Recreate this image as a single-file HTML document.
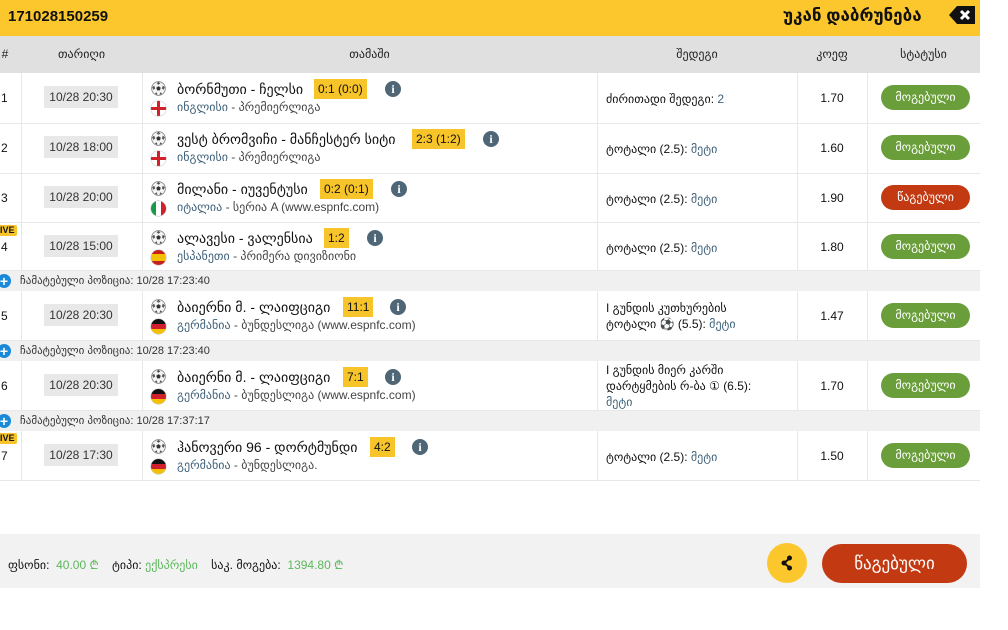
<!DOCTYPE html>
<html><head><meta charset="utf-8"><style>
*{box-sizing:border-box;margin:0;padding:0}
body{width:1008px;height:630px;background:#fff;font-family:"Liberation Sans","DejaVu Sans",sans-serif;color:#111;position:relative;overflow:hidden;font-size:12px}
.a{position:absolute}
.hdr{left:0;top:0;width:980px;height:36px;background:#fcc72c}
.th{left:0;top:36px;width:980px;height:37px;background:#e0e0e0}
.th div{position:absolute;top:11px;font-size:12px;text-align:center;color:#222}
.row{position:absolute;left:0;width:980px;border-bottom:1px solid #e8e8e8;background:#fff}
.row .v{position:absolute;top:0;bottom:0;width:1px;background:#e8e8e8}
.num{position:absolute;left:1px;font-size:12px}
.date{position:absolute;left:44px;width:74px;height:22px;background:#e8e8e8;color:#333;font-size:12px;text-align:center;line-height:22px}
.ball{position:absolute;left:151px;width:15px;height:15px}
.flag{position:absolute;left:151px;width:15px;height:15px;border-radius:50%;overflow:hidden;box-shadow:0 0 0 0.5px #bbb}
.t{position:absolute;left:177px;font-size:14px;white-space:nowrap}
.s{position:absolute;left:177px;font-size:12px;color:#444;white-space:nowrap}
.s b{font-weight:normal;color:#3e6079}
.sc{position:absolute;height:20px;background:#f7c42a;font-size:12px;line-height:20px;text-align:center;padding:0 4px}
.inf{position:absolute;width:16px;height:16px;border-radius:50%;background:#4f6677;color:#fff;font-weight:bold;font-size:12px;line-height:16px;text-align:center;font-family:"Liberation Serif",serif}
.res{position:absolute;left:606px;font-size:12px;line-height:16px}
.res b{font-weight:normal;color:#3e6079}
.cf{position:absolute;left:797px;width:70px;text-align:center;font-size:12px}
.st{position:absolute;left:881px;width:89px;height:25px;border-radius:13px;background:#6a9e3a;color:#fff;text-align:center;line-height:25px;font-size:12px}
.red{background:#c33a12}
.sub{position:absolute;left:0;width:980px;height:20px;background:#f0f0f0;font-size:11px;color:#333;line-height:20px;padding-left:20px}
.plus{position:absolute;left:-3px;top:3px;width:14px;height:14px;border-radius:50%;background:#1a8ad8;color:#fff;font-weight:bold;font-size:14px;line-height:14px;text-align:center}
.live{position:absolute;left:0;width:17px;height:11px;background:#f7c42a;font-size:9px;font-weight:bold;line-height:11px;overflow:hidden;border-radius:0 2px 2px 0}
</style></head><body>
<svg width="0" height="0" style="position:absolute"><defs><symbol id="b" viewBox="0 0 16 16"><circle cx="8" cy="8" r="7.3" fill="#f4f4f4" stroke="#777" stroke-width="0.8"/><path d="M8 5.5L10.4 7.2L9.5 10H6.5L5.6 7.2Z" fill="#333"/><path d="M8 0.8L10 2.5L8 4L6 2.5Z M14.8 6.5L13.5 9.5L11.6 8L12.5 5Z M1.2 6.5L2.5 9.5L4.4 8L3.5 5Z M4 13.5L6 12L7 14.8Z M12 13.5L10 12L9 14.8Z" fill="#555"/></symbol></defs></svg>
<div class="a hdr"></div>
<div class="a" style="left:8px;top:8px;font-size:15px;font-weight:bold">171028150259</div>
<div class="a" style="left:783px;top:6px;font-size:17px;font-weight:bold">უკან დაბრუნება</div>
<svg class="a" style="left:947px;top:4px" width="30" height="22" viewBox="0 0 30 22"><path d="M10 2H28V20H10L2 11Z" fill="#111"/><path d="M14 7L22 15M22 7L14 15" stroke="#fff" stroke-width="3"/></svg>

<div class="a th">
<div style="left:0;width:10px">#</div>
<div style="left:21px;width:121px">თარიღი</div>
<div style="left:142px;width:455px">თამაში</div>
<div style="left:597px;width:200px">შედეგი</div>
<div style="left:797px;width:70px">კოეფ</div>
<div style="left:867px;width:113px">სტატუსი</div>
</div>

<div class="row" style="top:73px;height:51px">
<div class="v" style="left:21px"></div><div class="v" style="left:142px"></div><div class="v" style="left:597px"></div><div class="v" style="left:797px"></div><div class="v" style="left:867px"></div>
<div class="num" style="top:18px">1</div><div class="date" style="top:13px">10/28 20:30</div>
<svg class="ball" style="top:8px"><use href="#b"/></svg><div class="t" style="top:8px">ბორნმუთი - ჩელსი</div>
<div class="sc" style="left:314px;top:6px">0:1 (0:0)</div><div class="inf" style="left:385px;top:8px">i</div>
<div class="flag" style="top:28px;background:linear-gradient(#fff 0 6px,#d0202c 6px 9px,#fff 9px)"><div style="position:absolute;left:6px;top:0;width:3px;height:15px;background:#d0202c"></div></div>
<div class="s" style="top:27px"><b>ინგლისი</b> - პრემიერლიგა</div>
<div class="res" style="top:18px">ძირითადი შედეგი: <b>2</b></div>
<div class="cf" style="top:18px">1.70</div><div class="st" style="top:12px">მოგებული</div>
</div>

<div class="row" style="top:124px;height:50px">
<div class="v" style="left:21px"></div><div class="v" style="left:142px"></div><div class="v" style="left:597px"></div><div class="v" style="left:797px"></div><div class="v" style="left:867px"></div>
<div class="num" style="top:17px">2</div><div class="date" style="top:12px">10/28 18:00</div>
<svg class="ball" style="top:7px"><use href="#b"/></svg><div class="t" style="top:7px">ვესტ ბრომვიჩი - მანჩესტერ სიტი</div>
<div class="sc" style="left:412px;top:5px">2:3 (1:2)</div><div class="inf" style="left:483px;top:7px">i</div>
<div class="flag" style="top:27px;background:linear-gradient(#fff 0 6px,#d0202c 6px 9px,#fff 9px)"><div style="position:absolute;left:6px;top:0;width:3px;height:15px;background:#d0202c"></div></div>
<div class="s" style="top:26px"><b>ინგლისი</b> - პრემიერლიგა</div>
<div class="res" style="top:17px">ტოტალი (2.5): <b>მეტი</b></div>
<div class="cf" style="top:17px">1.60</div><div class="st" style="top:11px">მოგებული</div>
</div>

<div class="row" style="top:174px;height:49px">
<div class="v" style="left:21px"></div><div class="v" style="left:142px"></div><div class="v" style="left:597px"></div><div class="v" style="left:797px"></div><div class="v" style="left:867px"></div>
<div class="num" style="top:17px">3</div><div class="date" style="top:12px">10/28 20:00</div>
<svg class="ball" style="top:7px"><use href="#b"/></svg><div class="t" style="top:7px">მილანი - იუვენტუსი</div>
<div class="sc" style="left:320px;top:5px">0:2 (0:1)</div><div class="inf" style="left:391px;top:7px">i</div>
<div class="flag" style="top:27px;background:linear-gradient(90deg,#1a9a48 0 5px,#fff 5px 10px,#d0202c 10px)"></div>
<div class="s" style="top:26px"><b>იტალია</b> - სერია A (www.espnfc.com)</div>
<div class="res" style="top:17px">ტოტალი (2.5): <b>მეტი</b></div>
<div class="cf" style="top:17px">1.90</div><div class="st red" style="top:11px">წაგებული</div>
</div>

<div class="row" style="top:223px;height:48px">
<div class="v" style="left:21px"></div><div class="v" style="left:142px"></div><div class="v" style="left:597px"></div><div class="v" style="left:797px"></div><div class="v" style="left:867px"></div>
<div class="live" style="top:2px">IVE</div>
<div class="num" style="top:17px">4</div><div class="date" style="top:12px">10/28 15:00</div>
<svg class="ball" style="top:7px"><use href="#b"/></svg><div class="t" style="top:7px">ალავესი - ვალენსია</div>
<div class="sc" style="left:324px;top:5px">1:2</div><div class="inf" style="left:367px;top:7px">i</div>
<div class="flag" style="top:27px;background:linear-gradient(#c6201c 0 4px,#f5c000 4px 11px,#c6201c 11px)"></div>
<div class="s" style="top:26px"><b>ესპანეთი</b> - პრიმერა დივიზიონი</div>
<div class="res" style="top:17px">ტოტალი (2.5): <b>მეტი</b></div>
<div class="cf" style="top:17px">1.80</div><div class="st" style="top:11px">მოგებული</div>
</div>

<div class="sub" style="top:271px"><div class="plus">+</div>ჩამატებული პოზიცია: 10/28 17:23:40</div>

<div class="row" style="top:291px;height:50px">
<div class="v" style="left:21px"></div><div class="v" style="left:142px"></div><div class="v" style="left:597px"></div><div class="v" style="left:797px"></div><div class="v" style="left:867px"></div>
<div class="num" style="top:18px">5</div><div class="date" style="top:13px">10/28 20:30</div>
<svg class="ball" style="top:8px"><use href="#b"/></svg><div class="t" style="top:8px">ბაიერნი მ. - ლაიფციგი</div>
<div class="sc" style="left:343px;top:6px">11:1</div><div class="inf" style="left:390px;top:8px">i</div>
<div class="flag" style="top:28px;background:linear-gradient(#111 0 5px,#d0202c 5px 10px,#f5c000 10px)"></div>
<div class="s" style="top:27px"><b>გერმანია</b> - ბუნდესლიგა (www.espnfc.com)</div>
<div class="res" style="top:9px">I გუნდის კუთხურების<br>ტოტალი ⚽ (5.5): <b>მეტი</b></div>
<div class="cf" style="top:18px">1.47</div><div class="st" style="top:12px">მოგებული</div>
</div>

<div class="sub" style="top:341px"><div class="plus">+</div>ჩამატებული პოზიცია: 10/28 17:23:40</div>

<div class="row" style="top:361px;height:50px">
<div class="v" style="left:21px"></div><div class="v" style="left:142px"></div><div class="v" style="left:597px"></div><div class="v" style="left:797px"></div><div class="v" style="left:867px"></div>
<div class="num" style="top:18px">6</div><div class="date" style="top:13px">10/28 20:30</div>
<svg class="ball" style="top:8px"><use href="#b"/></svg><div class="t" style="top:8px">ბაიერნი მ. - ლაიფციგი</div>
<div class="sc" style="left:343px;top:6px">7:1</div><div class="inf" style="left:385px;top:8px">i</div>
<div class="flag" style="top:28px;background:linear-gradient(#111 0 5px,#d0202c 5px 10px,#f5c000 10px)"></div>
<div class="s" style="top:27px"><b>გერმანია</b> - ბუნდესლიგა (www.espnfc.com)</div>
<div class="res" style="top:1px">I გუნდის მიერ კარში<br>დარტყმების რ-ბა ① (6.5):<br><b>მეტი</b></div>
<div class="cf" style="top:18px">1.70</div><div class="st" style="top:12px">მოგებული</div>
</div>

<div class="sub" style="top:411px"><div class="plus">+</div>ჩამატებული პოზიცია: 10/28 17:37:17</div>

<div class="row" style="top:431px;height:50px">
<div class="v" style="left:21px"></div><div class="v" style="left:142px"></div><div class="v" style="left:597px"></div><div class="v" style="left:797px"></div><div class="v" style="left:867px"></div>
<div class="live" style="top:2px">IVE</div>
<div class="num" style="top:18px">7</div><div class="date" style="top:13px">10/28 17:30</div>
<svg class="ball" style="top:8px"><use href="#b"/></svg><div class="t" style="top:8px">ჰანოვერი 96 - დორტმუნდი</div>
<div class="sc" style="left:370px;top:6px">4:2</div><div class="inf" style="left:412px;top:8px">i</div>
<div class="flag" style="top:28px;background:linear-gradient(#111 0 5px,#d0202c 5px 10px,#f5c000 10px)"></div>
<div class="s" style="top:27px"><b>გერმანია</b> - ბუნდესლიგა.</div>
<div class="res" style="top:18px">ტოტალი (2.5): <b>მეტი</b></div>
<div class="cf" style="top:18px">1.50</div><div class="st" style="top:12px">მოგებული</div>
</div>

<div class="a" style="left:0;top:534px;width:980px;height:54px;background:#f2f2f2"></div>
<div class="a" style="left:8px;top:556px;font-size:12px;white-space:nowrap">ფსონი: &nbsp;<span style="color:#5cb85c">40.00 ₾</span> &nbsp;&nbsp; ტიპი: <span style="color:#5cb85c">ექსპრესი</span> &nbsp;&nbsp; საკ. მოგება: &nbsp;<span style="color:#5cb85c">1394.80 ₾</span></div>
<div class="a" style="left:767px;top:543px;width:40px;height:40px;border-radius:50%;background:#fcc72c"></div>
<svg class="a" style="left:777px;top:553px" width="20" height="20" viewBox="0 0 20 20"><path d="M12.5 5.5L7 10L12.5 14.5" stroke="#111" stroke-width="2" fill="none"/><circle cx="12.5" cy="5" r="2.5" fill="#111"/><circle cx="7" cy="10" r="2.5" fill="#111"/><circle cx="12.5" cy="15" r="2.5" fill="#111"/></svg>
<div class="a" style="left:822px;top:544px;width:145px;height:39px;border-radius:20px;background:#c33a12;color:#fff;font-size:17px;text-align:center;line-height:39px">წაგებული</div>
</body></html>
